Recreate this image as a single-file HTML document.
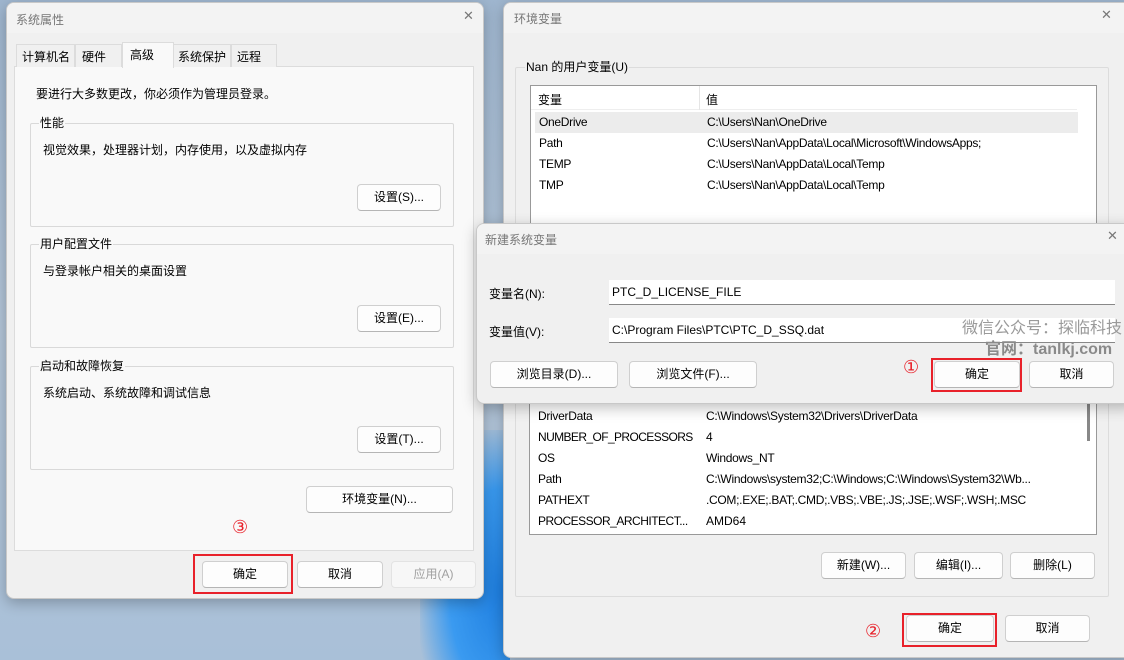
<!DOCTYPE html>
<html style="overflow:hidden;width:1124px;height:660px"><head><meta charset="utf-8"><style>
*{margin:0;padding:0;box-sizing:border-box}
body{width:1124px;height:660px;overflow:hidden;position:relative;font-family:"Liberation Sans","Noto Sans CJK SC",sans-serif;font-size:12px;color:#000;
background:linear-gradient(180deg,#9fb6cf 0%,#b3c5d8 50%,#a9c0d8 100%);}
.a{position:absolute}
.win{position:absolute;background:#f0f0f0;border:1px solid #c8c8c8;border-radius:8px;box-shadow:0 4px 14px rgba(0,0,0,.25);overflow:hidden}
.tb{position:absolute;left:0;right:0;top:0;background:#f3f3f3;color:#777;font-size:12px}
.x{position:absolute;color:#777;font-size:13px;font-family:"DejaVu Sans",sans-serif}
.btn{position:absolute;height:27px;background:#fdfdfd;border:1px solid #cfcfcf;border-bottom-color:#b5b5b5;border-radius:4px;text-align:center;line-height:25px;font-size:12px}
.grp{position:absolute;border:1px solid #d9d9d9;border-radius:2px}
.gl{position:absolute;top:-8px;left:8px;background:#f9f9f9;padding:0 1px;line-height:14px}
.red{position:absolute;border:2px solid #e8212a}
.num{position:absolute;color:#e8212a;font-size:18px;font-family:"DejaVu Sans",sans-serif}
.row{position:absolute;left:8px;height:21px;line-height:21px;white-space:nowrap;letter-spacing:-0.3px}
.row span{position:absolute;left:176px}
.inp{position:absolute;background:#fff;border-bottom:1px solid #888;height:25px;line-height:24px;padding-left:3px;font-size:12px}
</style></head><body>
<div class="a" style="left:420px;top:430px;width:90px;height:230px;background:radial-gradient(ellipse at 90% 70%,#1f7fe0 0%,#3a9af0 45%,rgba(80,150,230,0) 75%)"></div>

<!-- Left window -->
<div class="win" style="left:6px;top:2px;width:478px;height:597px;">
  <div class="tb" style="height:30px"><div class="a" style="left:9px;top:8px">系统属性</div><div class="x" style="left:456px;top:6px">✕</div></div>
  <div class="a" style="left:7px;top:63px;width:460px;height:485px;background:#f9f9f9;border:1px solid #dcdcdc"></div>
  <div class="a" style="left:9px;top:41px;width:59px;height:23px;border:1px solid #dcdcdc;border-bottom:none;background:#f0f0f0;padding:3px 0 0 5px">计算机名</div>
  <div class="a" style="left:68px;top:41px;width:47px;height:23px;border:1px solid #dcdcdc;border-bottom:none;background:#f0f0f0;padding:3px 0 0 6px">硬件</div>
  <div class="a" style="left:115px;top:39px;width:52px;height:26px;border:1px solid #dcdcdc;border-bottom:none;background:#f9f9f9;padding:3px 0 0 7px">高级</div>
  <div class="a" style="left:166px;top:41px;width:58px;height:23px;border:1px solid #dcdcdc;border-bottom:none;background:#f0f0f0;padding:3px 0 0 4px">系统保护</div>
  <div class="a" style="left:224px;top:41px;width:46px;height:23px;border:1px solid #dcdcdc;border-bottom:none;background:#f0f0f0;padding:3px 0 0 5px">远程</div>
  <div class="a" style="left:29px;top:82px">要进行大多数更改，你必须作为管理员登录。</div>
  <div class="grp" style="left:23px;top:120px;width:424px;height:104px"><div class="gl">性能</div><div class="a" style="left:12px;top:17px">视觉效果，处理器计划，内存使用，以及虚拟内存</div></div>
  <div class="btn" style="left:350px;top:181px;width:84px">设置(S)...</div>
  <div class="grp" style="left:23px;top:241px;width:424px;height:104px"><div class="gl">用户配置文件</div><div class="a" style="left:12px;top:17px">与登录帐户相关的桌面设置</div></div>
  <div class="btn" style="left:350px;top:302px;width:84px">设置(E)...</div>
  <div class="grp" style="left:23px;top:363px;width:424px;height:104px"><div class="gl">启动和故障恢复</div><div class="a" style="left:12px;top:17px">系统启动、系统故障和调试信息</div></div>
  <div class="btn" style="left:350px;top:423px;width:84px">设置(T)...</div>
  <div class="btn" style="left:299px;top:483px;width:147px">环境变量(N)...</div>
  <div class="num" style="left:225px;top:514px">③</div>
  <div class="btn" style="left:195px;top:558px;width:86px">确定</div>
  <div class="btn" style="left:290px;top:558px;width:86px">取消</div>
  <div class="btn" style="left:384px;top:558px;width:85px;color:#a0a0a0;background:#f7f7f7;border-color:#e3e3e3">应用(A)</div>
  <div class="red" style="left:186px;top:551px;width:100px;height:40px"></div>
</div>

<!-- Right window -->
<div class="win" style="left:503px;top:2px;width:630px;height:656px;">
  <div class="tb" style="height:30px"><div class="a" style="left:10px;top:7px">环境变量</div><div class="x" style="left:597px;top:5px">✕</div></div>
  <div class="grp" style="left:11px;top:64px;width:594px;height:300px;border-color:#dcdcdc"><div class="gl" style="background:#f0f0f0;left:9px">Nan 的用户变量(U)</div></div>
  <div class="a" style="left:26px;top:82px;width:567px;height:200px;background:#fff;border:1px solid #999">
    <div class="a" style="left:0;top:0;width:546px;height:24px;border-bottom:1px solid #eee"><div class="a" style="left:7px;top:5px">变量</div><div class="a" style="left:168px;top:0;height:24px;border-left:1px solid #e5e5e5"></div><div class="a" style="left:175px;top:5px">值</div></div>
    <div class="a" style="left:4px;top:26px;width:543px;height:21px;background:#ececec"></div>
    <div class="row" style="top:26px;left:8px">OneDrive<span style="left:168px">C:\Users\Nan\OneDrive</span></div>
    <div class="row" style="top:47px;left:8px">Path<span style="left:168px">C:\Users\Nan\AppData\Local\Microsoft\WindowsApps;</span></div>
    <div class="row" style="top:68px;left:8px">TEMP<span style="left:168px">C:\Users\Nan\AppData\Local\Temp</span></div>
    <div class="row" style="top:89px;left:8px">TMP<span style="left:168px">C:\Users\Nan\AppData\Local\Temp</span></div>
  </div>
  <div class="grp" style="left:11px;top:380px;width:594px;height:214px;border-color:#dcdcdc"></div>
  <div class="a" style="left:25px;top:380px;width:568px;height:152px;background:#fff;border:1px solid #999;border-top:none">
    <div class="a" style="left:557px;top:20px;width:3px;height:38px;background:#888"></div>
    <div class="row" style="top:23px;left:8px">DriverData<span style="left:168px">C:\Windows\System32\Drivers\DriverData</span></div>
    <div class="row" style="top:44px;left:8px;letter-spacing:-0.6px">NUMBER_OF_PROCESSORS<span style="left:168px;letter-spacing:0">4</span></div>
    <div class="row" style="top:65px;left:8px">OS<span style="left:168px">Windows_NT</span></div>
    <div class="row" style="top:86px;left:8px">Path<span style="left:168px">C:\Windows\system32;C:\Windows;C:\Windows\System32\Wb...</span></div>
    <div class="row" style="top:107px;left:8px">PATHEXT<span style="left:168px">.COM;.EXE;.BAT;.CMD;.VBS;.VBE;.JS;.JSE;.WSF;.WSH;.MSC</span></div>
    <div class="row" style="top:128px;left:8px;letter-spacing:-0.5px">PROCESSOR_ARCHITECT...<span style="left:168px;letter-spacing:0">AMD64</span></div>
  </div>
  <div class="btn" style="left:317px;top:549px;width:85px">新建(W)...</div>
  <div class="btn" style="left:410px;top:549px;width:89px">编辑(I)...</div>
  <div class="btn" style="left:506px;top:549px;width:85px">删除(L)</div>
  <div class="num" style="left:361px;top:618px">②</div>
  <div class="btn" style="left:402px;top:612px;width:88px">确定</div>
  <div class="btn" style="left:501px;top:612px;width:85px">取消</div>
  <div class="red" style="left:398px;top:610px;width:95px;height:34px"></div>
</div>

<!-- Popup -->
<div class="win" style="left:476px;top:223px;width:660px;height:181px;">
  <div class="tb" style="height:30px"><div class="a" style="left:8px;top:7px">新建系统变量</div><div class="x" style="left:630px;top:5px">✕</div></div>
  <div class="a" style="left:12px;top:61px">变量名(N):</div>
  <div class="inp" style="left:132px;top:56px;width:506px">PTC_D_LICENSE_FILE</div>
  <div class="a" style="left:12px;top:99px">变量值(V):</div>
  <div class="inp" style="left:132px;top:94px;width:506px">C:\Program Files\PTC\PTC_D_SSQ.dat</div>
  <div class="btn" style="left:13px;top:137px;width:128px">浏览目录(D)...</div>
  <div class="btn" style="left:152px;top:137px;width:128px">浏览文件(F)...</div>
  <div class="btn" style="left:457px;top:137px;width:86px">确定</div>
  <div class="btn" style="left:552px;top:137px;width:85px">取消</div>
  <div class="red" style="left:454px;top:134px;width:91px;height:34px"></div>
  <div class="num" style="left:426px;top:133px">①</div>
</div>
<div class="a" style="left:962px;top:314px;color:#9a9a9a;font-size:16px;white-space:nowrap">微信公众号：探临科技</div>
<div class="a" style="left:985px;top:335px;color:#8a8a8a;font-size:16px;font-weight:bold;white-space:nowrap">官网：tanlkj.com</div>
</body></html>
